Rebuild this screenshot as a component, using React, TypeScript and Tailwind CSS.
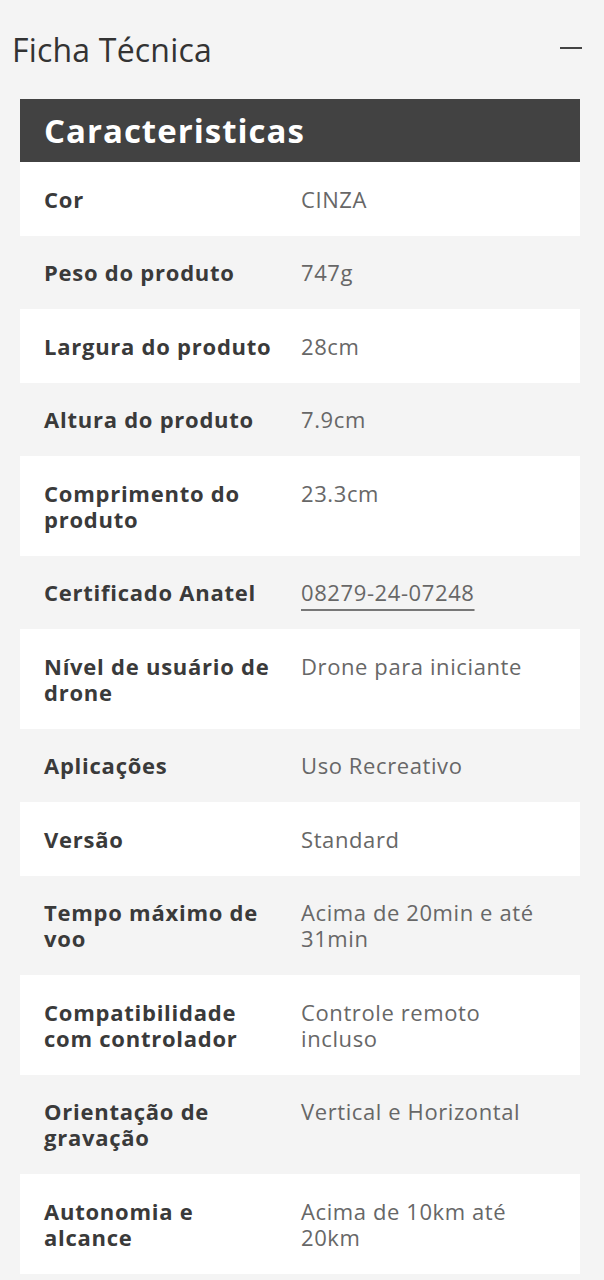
import React from "react";

type Row = { label: string; value: string; link?: boolean };

const rows: Row[] = [
  { label: "Cor", value: "CINZA" },
  { label: "Peso do produto", value: "747g" },
  { label: "Largura do produto", value: "28cm" },
  { label: "Altura do produto", value: "7.9cm" },
  { label: "Comprimento do produto", value: "23.3cm" },
  { label: "Certificado Anatel", value: "08279-24-07248", link: true },
  { label: "Nível de usuário de drone", value: "Drone para iniciante" },
  { label: "Aplicações", value: "Uso Recreativo" },
  { label: "Versão", value: "Standard" },
  { label: "Tempo máximo de voo", value: "Acima de 20min e até 31min" },
  { label: "Compatibilidade com controlador", value: "Controle remoto incluso" },
  { label: "Orientação de gravação", value: "Vertical e Horizontal" },
  { label: "Autonomia e alcance", value: "Acima de 10km até 20km" },
];

export default function App() {
  return (
    <div
      className="min-h-[1280px] w-full bg-[#f4f4f4] text-[#333]"
      style={{ fontFamily: '"Open Sans", "Noto Sans", sans-serif' }}
    >
      <div className="flex items-start justify-between pl-[12px] pr-[22px] pt-[30px]">
        <h2 className="text-[32px] leading-[40px] font-normal tracking-[0.2px] text-[#333]">
          Ficha Técnica
        </h2>
        <div className="mt-[17px] h-[2px] w-[22px] bg-[#444]" />
      </div>
      <div className="ml-[20px] mr-[24px] mt-[29px]">
        <div className="flex h-[63px] items-center bg-[#424242] pl-[24px]">
          <span className="text-[33px] font-bold leading-none tracking-[1px] text-white">
            Caracteristicas
          </span>
        </div>
        {rows.map((r, i) => (
          <div
            key={r.label}
            className={`grid grid-cols-[281px_1fr] py-[23.75px] text-[22px] leading-[26px] ${
              i % 2 === 0 ? "bg-white" : "bg-[#f4f4f4]"
            }`}
          >
            <div className="pl-[24px] pr-[20px] font-bold tracking-[0.75px] text-[#3a3a3a]">
              {r.label}
            </div>
            <div className="pr-[36px] tracking-[0.6px] text-[#676767]">
              {r.link ? (
                <span className="underline decoration-[#777] decoration-[1.5px] underline-offset-[8px]">
                  {r.value}
                </span>
              ) : (
                r.value
              )}
            </div>
          </div>
        ))}
      </div>
    </div>
  );
}
